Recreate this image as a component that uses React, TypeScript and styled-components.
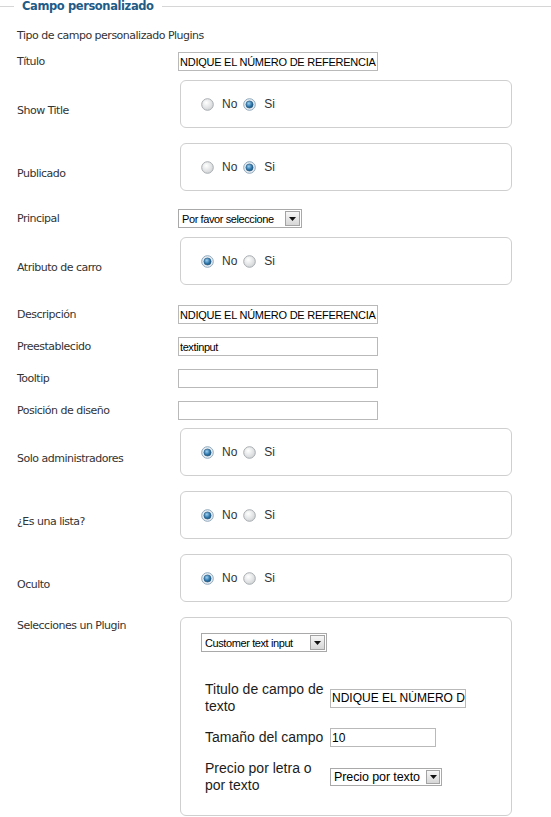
import React from "react";
import styled, { createGlobalStyle } from "styled-components";

const GlobalStyle = createGlobalStyle`
  html, body { margin: 0; padding: 0; background: #ffffff; }
  body { width: 551px; height: 817px; overflow: hidden; }
  * { box-sizing: border-box; }
`;

const Fieldset = styled.fieldset`
  margin: 0;
  padding: 0;
  border: 0;
  border-top: 1px solid #d6d6d6;
  min-width: 0;
`;

const Legend = styled.legend`
  margin-left: 14px;
  padding: 0 8px;
  font-family: "DejaVu Sans", Tahoma, sans-serif;
  font-weight: bold;
  font-size: 11.5px;
  letter-spacing: -0.4px;
  line-height: 12px;
  color: #225b86;
`;

const Form = styled.div`
  display: flex;
  flex-direction: column;
  gap: 3px;
  padding: 16px 0 0 17px;
`;

const Row = styled.div<{ $pad?: string; $align?: string }>`
  display: grid;
  grid-template-columns: 161px 1fr;
  align-items: ${(p) => p.$align ?? "center"};
  justify-items: start;
  padding: ${(p) => p.$pad ?? "5px 0"};
`;

const Label = styled.div<{ $top?: number }>`
  font-family: "DejaVu Sans", Tahoma, sans-serif;
  font-size: 11px;
  letter-spacing: -0.5px;
  line-height: 15px;
  color: #333333;
  padding-top: ${(p) => p.$top ?? 0}px;
  white-space: nowrap;
`;

const TextInput = styled.input<{ $w: number; $size?: number; $ls?: number }>`
  width: ${(p) => p.$w}px;
  height: 19px;
  margin: 0;
  padding: 0 0 0 1px;
  border: 1px solid #b9b9b9;
  background: #ffffff;
  font-family: "Liberation Sans", Arial, sans-serif;
  font-size: ${(p) => p.$size ?? 11}px;
  letter-spacing: ${(p) => p.$ls ?? 0}px;
  color: #000000;
  outline: none;
`;

const SelectBox = styled.div<{ $w: number; $h: number; $size: number; $ls: number }>`
  width: ${(p) => p.$w}px;
  height: ${(p) => p.$h}px;
  display: flex;
  align-items: center;
  justify-content: space-between;
  padding: 0 1px 0 3px;
  border: 1px solid #a9a9a9;
  background: #ffffff;
  font-family: "Liberation Sans", Arial, sans-serif;
  font-size: ${(p) => p.$size}px;
  letter-spacing: ${(p) => p.$ls}px;
  color: #000000;
  white-space: nowrap;
  overflow: hidden;
`;

const ArrowButton = styled.span<{ $s: number }>`
  width: ${(p) => p.$s}px;
  height: ${(p) => p.$s}px;
  flex: none;
  display: flex;
  align-items: center;
  justify-content: center;
  border: 1px solid #a3a3a3;
  background: linear-gradient(#f7f7f7, #d6d6d6);
`;

const RadioBox = styled.div`
  width: 332px;
  height: 48px;
  margin: 0 0 12px 2px;
  display: flex;
  align-items: center;
  padding-left: 20px;
  border: 1px solid #cfcfcf;
  border-radius: 6px;
  background: #ffffff;
`;

const RadioText = styled.span<{ $gap: number }>`
  font-family: "Liberation Sans", Arial, sans-serif;
  font-size: 12px;
  line-height: 14px;
  color: #333333;
  margin-left: 8px;
  margin-right: ${(p) => p.$gap}px;
`;

const RadioIconWrap = styled.span`
  display: flex;
  width: 13px;
  height: 13px;
`;

const PluginBox = styled.div`
  width: 332px;
  margin-left: 2px;
  padding: 15px 20px 21px 20px;
  border: 1px solid #cfcfcf;
  border-radius: 6px;
  background: #ffffff;
`;

const PluginGrid = styled.div`
  display: grid;
  grid-template-columns: 125px auto;
  row-gap: 13px;
  align-items: center;
  justify-items: start;
  margin-top: 29px;
  padding-left: 4px;
`;

const PluginLabel = styled.div`
  font-family: "Liberation Sans", Arial, sans-serif;
  font-size: 14px;
  line-height: 17px;
  color: #1c1c1c;
`;

const Radio = ({ checked }: { checked: boolean }) => (
  <RadioIconWrap>
    <svg width="13" height="13" viewBox="0 0 13 13">
      <defs>
        <radialGradient id="radOff" cx="40%" cy="35%" r="70%">
          <stop offset="0%" stopColor="#ffffff" />
          <stop offset="100%" stopColor="#cfd2d4" />
        </radialGradient>
        <radialGradient id="radOn" cx="40%" cy="35%" r="70%">
          <stop offset="0%" stopColor="#9fd0f0" />
          <stop offset="60%" stopColor="#2f78ad" />
          <stop offset="100%" stopColor="#1a4f78" />
        </radialGradient>
      </defs>
      <circle
        cx="6.5"
        cy="6.5"
        r="5.8"
        fill={checked ? "#e9eff4" : "url(#radOff)"}
        stroke={checked ? "#8ea7bb" : "#a9adb0"}
        strokeWidth="1"
      />
      {checked && (
        <circle cx="6.5" cy="6.5" r="3.6" fill="url(#radOn)" stroke="#24577f" strokeWidth="0.6" />
      )}
    </svg>
  </RadioIconWrap>
);

const YesNo = ({ yes }: { yes: boolean }) => (
  <RadioBox>
    <Radio checked={!yes} />
    <RadioText $gap={6}>No</RadioText>
    <Radio checked={yes} />
    <RadioText $gap={0}>Si</RadioText>
  </RadioBox>
);

const Select = ({
  text,
  w,
  h,
  size,
  ls,
  arrow = 15,
}: {
  text: string;
  w: number;
  h: number;
  size: number;
  ls: number;
  arrow?: number;
}) => (
  <SelectBox $w={w} $h={h} $size={size} $ls={ls}>
    <span>{text}</span>
    <ArrowButton $s={arrow}>
      <svg width="7" height="4" viewBox="0 0 7 4">
        <path d="M0 0 H7 L3.5 4 Z" fill="#111" />
      </svg>
    </ArrowButton>
  </SelectBox>
);

const REF = "NDIQUE EL NÚMERO DE REFERENCIA";

export default function App() {
  return (
    <>
      <GlobalStyle />
      <Fieldset>
        <Legend>Campo personalizado</Legend>
        <Form>
          <Label>Tipo de campo personalizado Plugins</Label>
          <Row $pad="6px 0 6px">
            <Label>Título</Label>
            <TextInput $w={200} $ls={-0.25} readOnly value={REF} />
          </Row>
          <Row $pad="0">
            <Label>Show Title</Label>
            <YesNo yes />
          </Row>
          <Row $pad="0">
            <Label>Publicado</Label>
            <YesNo yes />
          </Row>
          <Row $pad="3px 0 6px">
            <Label>Principal</Label>
            <Select text="Por favor seleccione" w={124} h={19} size={11} ls={-0.4} />
          </Row>
          <Row $pad="0">
            <Label>Atributo de carro</Label>
            <YesNo yes={false} />
          </Row>
          <Row>
            <Label>Descripción</Label>
            <TextInput $w={200} $ls={-0.25} readOnly value={REF} />
          </Row>
          <Row>
            <Label>Preestablecido</Label>
            <TextInput $w={200} $ls={-0.4} readOnly value="textinput" />
          </Row>
          <Row>
            <Label>Tooltip</Label>
            <TextInput $w={200} readOnly value="" />
          </Row>
          <Row>
            <Label>Posición de diseño</Label>
            <TextInput $w={200} readOnly value="" />
          </Row>
          <Row $pad="0">
            <Label>Solo administradores</Label>
            <YesNo yes={false} />
          </Row>
          <Row $pad="0">
            <Label>¿Es una lista?</Label>
            <YesNo yes={false} />
          </Row>
          <Row $pad="0">
            <Label>Oculto</Label>
            <YesNo yes={false} />
          </Row>
          <Row $pad="0" $align="start">
            <Label $top={1}>Selecciones un Plugin</Label>
            <PluginBox>
              <Select text="Customer text input" w={126} h={19} size={11} ls={-0.4} />
              <PluginGrid>
                <PluginLabel>Titulo de campo de texto</PluginLabel>
                <TextInput $w={136} $size={12} readOnly value="NDIQUE EL NÚMERO DE REFERENCIA" />
                <PluginLabel>Tamaño del campo</PluginLabel>
                <TextInput $w={106} $size={12} readOnly value="10" />
                <PluginLabel>Precio por letra o por texto</PluginLabel>
                <Select text="Precio por texto" w={112} h={18} size={12.5} ls={-0.1} arrow={14} />
              </PluginGrid>
            </PluginBox>
          </Row>
        </Form>
      </Fieldset>
    </>
  );
}
